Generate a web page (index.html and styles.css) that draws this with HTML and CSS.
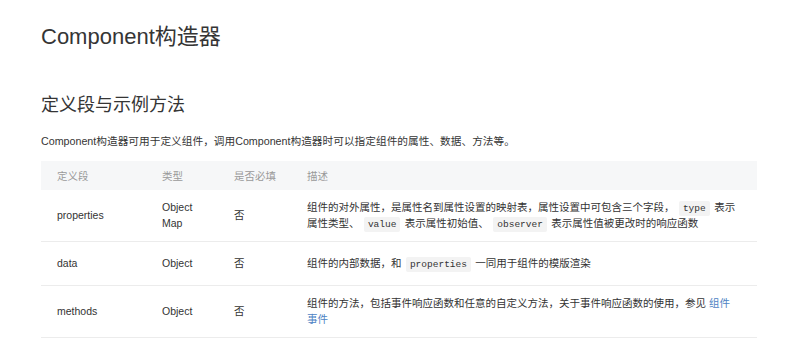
FILE: index.html
```html
<!DOCTYPE html>
<html lang="zh-CN">
<head>
<meta charset="utf-8">
<title>Component构造器</title>
<link rel="stylesheet" href="styles.css">
</head>
<body>
<main class="doc">
  <h1 class="title">Component构造器</h1>
  <h2 class="section">定义段与示例方法</h2>
  <p class="intro">Component构造器可用于定义组件，调用Component构造器时可以指定组件的属性、数据、方法等。</p>
  <table class="fields">
    <colgroup>
      <col class="c1"><col class="c2"><col class="c3"><col class="c4">
    </colgroup>
    <thead>
      <tr><th>定义段</th><th>类型</th><th>是否必填</th><th>描述</th></tr>
    </thead>
    <tbody>
      <tr>
        <td>properties</td>
        <td>Object Map</td>
        <td>否</td>
        <td class="desc">组件的对外属性，是属性名到属性设置的映射表，属性设置中可包含三个字段， <code>type</code> 表示属性类型、 <code>value</code> 表示属性初始值、 <code>observer</code> 表示属性值被更改时的响应函数</td>
      </tr>
      <tr>
        <td>data</td>
        <td>Object</td>
        <td>否</td>
        <td class="desc">组件的内部数据，和 <code>properties</code> 一同用于组件的模版渲染</td>
      </tr>
      <tr>
        <td>methods</td>
        <td>Object</td>
        <td>否</td>
        <td class="desc">组件的方法，包括事件响应函数和任意的自定义方法，关于事件响应函数的使用，参见 <a class="link" href="#">组件事件</a></td>
      </tr>
    </tbody>
  </table>
</main>
</body>
</html>
```

FILE: styles.css
```css
html, body {
  margin: 0;
  padding: 0;
  background: #ffffff;
}

body {
  font-family: "Liberation Sans", "Noto Sans CJK SC", sans-serif;
  color: #333333;
}

.doc {
  padding: 0 43px 0 41px;
}

.title {
  margin: 22px 0 0;
  font-size: 22px;
  line-height: 30px;
  font-weight: 400;
  color: #353535;
}

.section {
  margin: 40px 0 0;
  font-size: 18px;
  line-height: 26px;
  font-weight: 400;
  color: #353535;
}

.intro {
  margin: 15px 0 0;
  font-size: 10.7px;
  line-height: 16px;
  color: #353535;
}

.fields {
  margin-top: 12px;
  width: 716px;
  border-collapse: collapse;
  table-layout: fixed;
  font-size: 10.5px;
}

.c1 { width: 105px; }
.c2 { width: 72px; }
.c3 { width: 73px; }
.c4 { width: 466px; }

.fields th {
  background: #f6f7f8;
  color: #9a9a9a;
  font-weight: 400;
  text-align: left;
  height: 29px;
  padding: 0 8px 0 16px;
  line-height: 16px;
}

.fields td {
  padding: 9px 8px 10px 16px;
  line-height: 16px;
  vertical-align: middle;
  border-bottom: 1px solid #ececec;
  color: #333333;
}

.fields td.desc {
  padding-right: 18px;
}

.fields tbody tr {
  height: 44px;
}

.fields code {
  font-family: "Liberation Mono", "DejaVu Sans Mono", monospace;
  font-size: 9.5px;
  line-height: 1;
  background: #f3f3f3;
  color: #333333;
  padding: 2px 4px;
  margin: 0 1.5px;
  border-radius: 2px;
}

.link {
  color: #4e83c4;
  text-decoration: none;
}
```
